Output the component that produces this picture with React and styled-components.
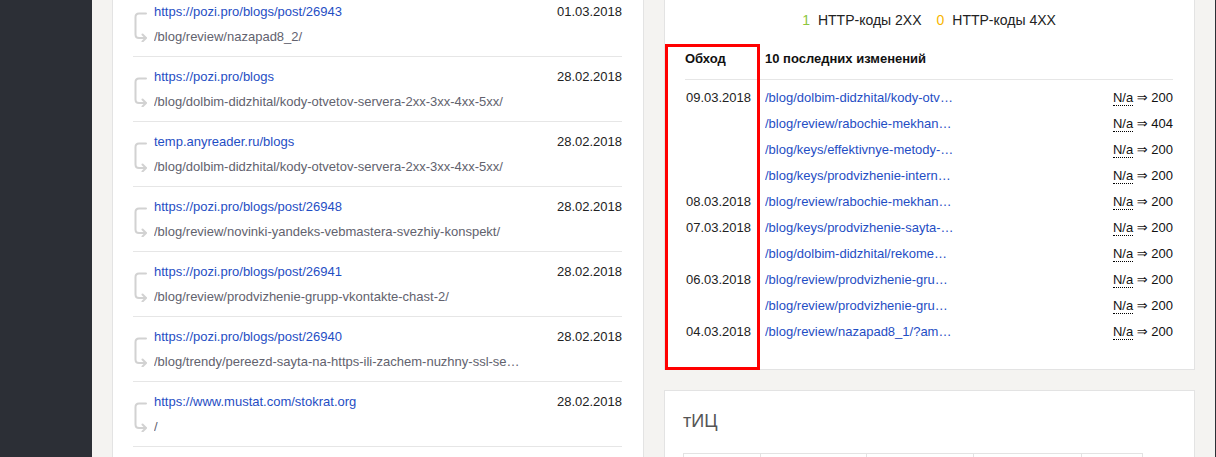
import React from 'react';
import styled, { createGlobalStyle } from 'styled-components';

const GlobalStyle = createGlobalStyle`
  html, body { margin: 0; padding: 0; }
  body {
    background: #f4f3f1;
    font-family: "Liberation Sans", Arial, "DejaVu Sans", sans-serif;
    font-size: 13px;
    color: #222;
    overflow: hidden;
  }
  * { box-sizing: border-box; }
`;

const Page = styled.div`
  display: flex;
  height: 457px;
  overflow: hidden;
`;

const Sidebar = styled.aside`
  flex: 0 0 92px;
  background: #2c2f36;
`;

const Edge = styled.div`
  flex: 0 0 1px;
  background: #2c2f36;
`;

const Main = styled.main`
  flex: 1;
  display: flex;
  align-items: flex-start;
  gap: 20px;
  padding-left: 20px;
  margin-top: -9px;
`;

const Column = styled.div`
  flex: none;
  width: ${(p) => p.$w}px;
  display: flex;
  flex-direction: column;
  gap: 20px;
`;

const Card = styled.section`
  position: relative;
  background: #fff;
  border: 1px solid #e3e3e3;
  padding: ${(p) => p.$pad};
`;

/* ---------- redirects list ---------- */

const RedirectRow = styled.div`
  display: grid;
  grid-template-columns: 21px minmax(0, 1fr) auto;
  grid-template-rows: 20px 20px;
  row-gap: 5px;
  padding: 10px 0 9px;
  border-bottom: 1px solid #e6e6e6;
  line-height: 20px;
`;

const ArrowCell = styled.div`
  grid-column: 1;
  grid-row: 1 / span 2;
  padding-top: 8px;
`;

const SourceLink = styled.a`
  grid-column: 2;
  grid-row: 1;
  color: #1f4ec4;
  text-decoration: none;
  white-space: nowrap;
`;

const RowDate = styled.span`
  grid-column: 3;
  grid-row: 1;
  text-align: right;
  color: #222;
`;

const TargetPath = styled.span`
  grid-column: 2 / span 2;
  grid-row: 2;
  color: #62626e;
  max-width: 368px;
  overflow: hidden;
  white-space: nowrap;
  text-overflow: ellipsis;
`;

const RedirectIcon = () => (
  <svg width="16" height="32" viewBox="0 0 16 32" fill="none" stroke="#d2d2d2" strokeWidth="2" strokeLinecap="round" strokeLinejoin="round">
    <path d="M13 3.5 H6 Q2.5 3.5 2.5 7 V24.5 Q2.5 28 6 28 H12.5" />
    <path d="M9.5 24.5 L13 28 L9.5 31.5" />
  </svg>
);

/* ---------- legend + changes ---------- */

const Legend = styled.div`
  display: flex;
  justify-content: center;
  gap: 15px;
  font-size: 14px;
  line-height: 20px;
`;

const LegendItem = styled.span`
  display: inline-flex;
  gap: 8px;
`;

const LegendCount = styled.span`
  color: ${(p) => p.$color};
`;

const Changes = styled.div`
  margin-top: 15px;
`;

const ChangesHead = styled.div`
  display: grid;
  grid-template-columns: 80px 1fr;
  padding: 6px 0 12px;
  border-bottom: 1px solid #e6e6e6;
  font-weight: bold;
  line-height: 16px;
  color: #111;
`;

const ChangesBody = styled.div`
  padding-top: 5px;
`;

const ChangeRow = styled.div`
  display: grid;
  grid-template-columns: 80px 189px 1fr;
  height: 26px;
  line-height: 26px;
`;

const ChangeDate = styled.span`
  text-align: right;
  padding-right: 14px;
  color: #222;
`;

const ChangeLink = styled.a`
  color: #1f4ec4;
  text-decoration: none;
  overflow: hidden;
  white-space: nowrap;
  text-overflow: ellipsis;
`;

const ChangeStatus = styled.span`
  text-align: right;
  white-space: nowrap;
  color: #111;
`;

const Unknown = styled.abbr`
  text-decoration: none;
  border-bottom: 1px dotted #000;
  cursor: help;
`;

const Arrow = styled.span`
  font-family: "DejaVu Sans", sans-serif;
  font-size: 13px;
`;

const Highlight = styled.div`
  position: absolute;
  left: 0;
  top: 52px;
  width: 95px;
  height: 326px;
  border: 3px solid #ff0000;
  pointer-events: none;
`;

/* ---------- тИЦ card ---------- */

const CardTitle = styled.h3`
  margin: 0;
  font-size: 18px;
  line-height: 20px;
  font-weight: normal;
  color: #555;
`;

const TicTable = styled.table`
  margin-top: 22px;
  border-collapse: collapse;
  width: 460px;
`;

const TicCell = styled.th`
  width: ${(p) => p.$w}px;
  height: 40px;
  border: 1px solid #e3e3e3;
  font-weight: normal;
  color: #555;
  text-align: left;
  padding: 10px 8px;
`;

const redirects = [
  { from: 'https://pozi.pro/blogs/post/26943', to: '/blog/review/nazapad8_2/', date: '01.03.2018' },
  { from: 'https://pozi.pro/blogs', to: '/blog/dolbim-didzhital/kody-otvetov-servera-2xx-3xx-4xx-5xx/', date: '28.02.2018' },
  { from: 'temp.anyreader.ru/blogs', to: '/blog/dolbim-didzhital/kody-otvetov-servera-2xx-3xx-4xx-5xx/', date: '28.02.2018' },
  { from: 'https://pozi.pro/blogs/post/26948', to: '/blog/review/novinki-yandeks-vebmastera-svezhiy-konspekt/', date: '28.02.2018' },
  { from: 'https://pozi.pro/blogs/post/26941', to: '/blog/review/prodvizhenie-grupp-vkontakte-chast-2/', date: '28.02.2018' },
  { from: 'https://pozi.pro/blogs/post/26940', to: '/blog/trendy/pereezd-sayta-na-https-ili-zachem-nuzhny-ssl-sertifikaty/', date: '28.02.2018' },
  { from: 'https://www.mustat.com/stokrat.org', to: '/', date: '28.02.2018' },
  { from: 'https://pozi.pro/blogs/post/26939', to: '/blog/review/prodvizhenie-grupp-vkontakte-chast-1/', date: '27.02.2018' },
];

const changes = [
  { date: '09.03.2018', url: '/blog/dolbim-didzhital/kody-otvetov-servera-2xx-3xx-4xx-5xx/', code: '200' },
  { date: '', url: '/blog/review/rabochie-mekhanizmy-prodvizheniya/', code: '404' },
  { date: '', url: '/blog/keys/effektivnye-metody-prodvizheniya/', code: '200' },
  { date: '', url: '/blog/keys/prodvizhenie-internet-magazina/', code: '200' },
  { date: '08.03.2018', url: '/blog/review/rabochie-mekhanizmy-prodvizheniya/', code: '200' },
  { date: '07.03.2018', url: '/blog/keys/prodvizhenie-sayta-v-google/', code: '200' },
  { date: '', url: '/blog/dolbim-didzhital/rekomendatsii-po-seo/', code: '200' },
  { date: '06.03.2018', url: '/blog/review/prodvizhenie-grupp-vkontakte-chast-2/', code: '200' },
  { date: '', url: '/blog/review/prodvizhenie-grupp-vkontakte-chast-1/', code: '200' },
  { date: '04.03.2018', url: '/blog/review/nazapad8_1/?amp=1', code: '200' },
];

const ticColumns = [
  { w: 77, label: 'Дата' },
  { w: 107, label: 'тИЦ' },
  { w: 107, label: 'Изменение' },
  { w: 108, label: 'Категория' },
  { w: 61, label: '' },
];

export default function App() {
  return (
    <>
      <GlobalStyle />
      <Page>
        <Sidebar />
        <Main>
          <Column $w={532}>
            <Card $pad="0 21px 0 20px">
              {redirects.map((r, i) => (
                <RedirectRow key={i}>
                  <ArrowCell>
                    <RedirectIcon />
                  </ArrowCell>
                  <SourceLink href="#">{r.from}</SourceLink>
                  <RowDate>{r.date}</RowDate>
                  <TargetPath>{r.to}</TargetPath>
                </RedirectRow>
              ))}
            </Card>
          </Column>
          <Column $w={531}>
            <Card $pad="18px 21px 24px 20px">
              <Legend>
                <LegendItem>
                  <LegendCount $color="#8cc63e">1</LegendCount>
                  <span>HTTP-коды 2XX</span>
                </LegendItem>
                <LegendItem>
                  <LegendCount $color="#f7b500">0</LegendCount>
                  <span>HTTP-коды 4XX</span>
                </LegendItem>
              </Legend>
              <Changes>
                <ChangesHead>
                  <span>Обход</span>
                  <span>10 последних изменений</span>
                </ChangesHead>
                <ChangesBody>
                  {changes.map((c, i) => (
                    <ChangeRow key={i}>
                      <ChangeDate>{c.date}</ChangeDate>
                      <ChangeLink href="#">{c.url}</ChangeLink>
                      <ChangeStatus>
                        <Unknown title="Нет данных">N/a</Unknown> <Arrow>⇒</Arrow> {c.code}
                      </ChangeStatus>
                    </ChangeRow>
                  ))}
                </ChangesBody>
              </Changes>
              <Highlight />
            </Card>
            <Card $pad="20px 18px 20px">
              <CardTitle>тИЦ</CardTitle>
              <TicTable>
                <thead>
                  <tr>
                    {ticColumns.map((c, i) => (
                      <TicCell key={i} $w={c.w}>{c.label}</TicCell>
                    ))}
                  </tr>
                </thead>
              </TicTable>
            </Card>
          </Column>
        </Main>
        <Edge />
      </Page>
    </>
  );
}
